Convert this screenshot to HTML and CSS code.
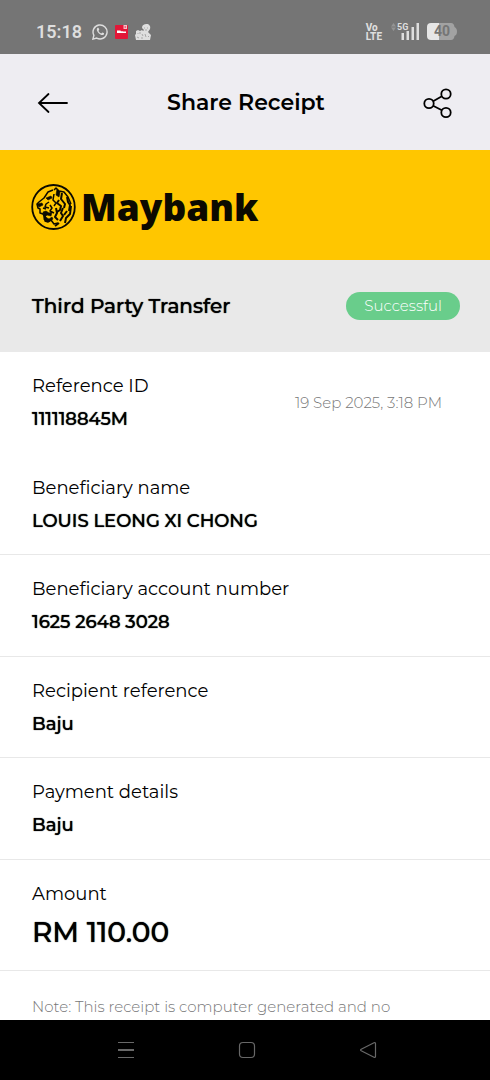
FILE: index.html
```html
<!DOCTYPE html>
<html lang="en">
<head>
<meta charset="utf-8">
<meta name="viewport" content="width=device-width, initial-scale=1">
<title>Share Receipt</title>
<link rel="stylesheet" href="styles.css">
</head>
<body>
<div class="status">
  <span class="time">15:18</span>
  <svg class="status-icon" width="16" height="16" viewBox="0 0 16 16" fill="none" stroke="#dedede" stroke-width="1.4">
    <path d="M.9 15.1l1-3.8a7 7 0 1 1 2.8 2.8z"/>
    <path d="M5.2 4.2c-2 2.200 3.700 8.400 6.400 6.500.6-.5.6-1.300.1-1.600l-1.400-.7-1 1C8 9 7 8 6.500 6.700l.8-1-.6-1.400c-.3-.6-1-.6-1.500-.1z" fill="#dedede" stroke="none"/>
  </svg>
  <svg class="status-icon" width="13" height="14" viewBox="0 0 13 14">
    <rect width="13" height="14" rx="1" fill="#e21738"/>
    <path d="M8.500 0H12v4H8.500z" fill="#f3c3ca"/><path d="M9.500 1.500h1.500v1H9.500z" fill="#e21738"/>
    <path d="M2 5.500h3.500l.5 1 1-.5 1 .5h3v1.500H2z" fill="#fff"/>
  </svg>
  <svg class="status-icon" width="16" height="16" viewBox="0 0 16 16">
    <path d="M7 4C7 1 9 0 11.500 0S16 2 15 5l-2 3 3 3-1 5H1l-1-5 1-1V7l2-1 2 1 2-1 1 1 1-1z" fill="#dedede"/>
    <path d="M9 4h1M12 4h1M10 6h2M3 9v1M5 8v2M2 13l2 1M7 10l1 2M10 10l1 3M13 13l1-1M6 14h2" fill="none" stroke="#a8a8a8"/>
  </svg>
  <span class="volte"><span>Vo</span><span>LTE</span></span>
  <svg class="signal" width="28" height="19" viewBox="0 0 28 19" fill="#dedede">
    <path d="M0 4.500L2.500 1 5 4.500zM0 5.500h5L2.500 9z" fill="#949494"/>
    <text x="6" y="8" class="signal-text">5G</text>
    <path d="M10.500 11H13v7h-2.500zM15.500 9H18v9h-2.500zM20.500 5h2.500v13h-2.500zM25.500 1H28v17h-2.500z"/>
  </svg>
  <svg class="battery" width="30" height="17" viewBox="0 0 30 17">
    <path d="M12 0h12q3 0 3.500 4 2.500 1 2.500 4.500T27.500 13q-.5 4-3.500 4H12z" fill="#a2a2a2"/>
    <path d="M12 0H4Q0 0 0 4v9q0 4 4 4h8z" fill="#e6e6e6"/>
    <text x="7" y="13" class="battery-text">40</text>
  </svg>
</div>
<header class="header">
  <button class="icon-button" aria-label="Back">
    <svg width="32" height="24" viewBox="0 0 32 24" fill="none" stroke="#000" stroke-width="1.800" stroke-linecap="round"><path d="M30 12H2M11.500 3L2 12l9.500 9"/></svg>
  </button>
  <h1 class="page-title">Share Receipt</h1>
  <button class="icon-button" aria-label="Share">
    <svg width="30" height="32" viewBox="0 0 30 32" fill="none" stroke="#000" stroke-width="1.800"><circle cx="6" cy="16.500" r="4.700"/><circle cx="23" cy="7" r="4.700"/><circle cx="23" cy="25.500" r="4.700"/><path d="M10.100 14.200L18.900 9.300M10.100 18.800L18.900 23.200"/></svg>
  </button>
</header>
<main class="receipt">
  <div class="brand">
    <svg class="tiger" width="46" height="48" viewBox="0 0 46 48" fill="none" stroke="#0c0a00" stroke-width="1.500" stroke-linejoin="round">
      <ellipse cx="22.500" cy="24" rx="21.300" ry="22" stroke-width="1.800"/>
      <path d="M23 7l2-2 3 3 5 1 4 5 3 7M22 7l-5 2-4 6-5 4-2 2 1 4 2 1v4l3 1 3 4-1 3 3 1 3-2 3 4 4-1"/>
      <path d="M6 21l5-1 1 2-4 2zM15 15l5-2 1 2-4 2zM26 6l3 3-1 5-3-2zM12 29l3-1 3 2 3-1-1 4-4-1-2 2 4 2 3-2 1 2-4 3-5-2z" fill="#0c0a00" stroke-width=".6"/>
      <path d="M23 11l-1 6 3 3-2 3M18 19l-3 2-1 3 4 1M19 22l2 3-2 3 4 2M12 25l3 1"/>
      <path d="M31 10l-1 6 4 5-1 4M36 14l1 5 2 3-1 6M28 17l-2 3 4 3-1 4-3 2M25 25l1 5-2 4 3 3M32 25l-2 5 2 3-3 5M40 23l-1 8-4 4-1 5M36 28l-3 4M28 40l-4 3" stroke-width="2"/>
    </svg>
    <span class="brand-name">Maybank</span>
  </div>
  <div class="summary">
    <h2 class="summary-title">Third Party Transfer</h2>
    <span class="badge">Successful</span>
  </div>
  <dl class="details">
    <div class="row row-reference">
      <div class="field"><dt>Reference ID</dt><dd>111118845M</dd></div>
      <time class="date" datetime="2025-09-19T15:18">19 Sep 2025, 3:18 PM</time>
    </div>
    <div class="row"><div class="field"><dt>Beneficiary name</dt><dd>LOUIS LEONG XI CHONG</dd></div></div>
    <div class="row"><div class="field"><dt>Beneficiary account number</dt><dd>1625 2648 3028</dd></div></div>
    <div class="row"><div class="field"><dt>Recipient reference</dt><dd>Baju</dd></div></div>
    <div class="row"><div class="field"><dt>Payment details</dt><dd>Baju</dd></div></div>
    <div class="row"><div class="field"><dt>Amount</dt><dd class="amount">RM 110.00</dd></div></div>
  </dl>
  <p class="note">Note: This receipt is computer generated and no</p>
</main>
<nav class="navbar">
  <button class="nav-button" aria-label="Recent apps"><svg width="18" height="18" viewBox="0 0 18 18" fill="none" stroke="#686868"><path d="M1 1.500h16M1 16.500h16"/><path d="M1 9h16" stroke-width="2"/></svg></button>
  <button class="nav-button" aria-label="Home"><svg width="18" height="18" viewBox="0 0 18 18" fill="none" stroke="#686868" stroke-width="1.200"><rect x="1.500" y="1.500" width="15" height="15" rx="3.500"/></svg></button>
  <button class="nav-button" aria-label="Back"><svg width="18" height="18" viewBox="0 0 18 18" fill="none" stroke="#686868" stroke-width="1.200"><path d="M15 1.800L2.200 8.200q-1.200.8 0 1.600L15 16.200q1.500.6 1.500-1V2.800q0-1.600-1.500-1z"/></svg></button>
</nav>
</body>
</html>
```
FILE: styles.css
```css
* { box-sizing: border-box; }

body {
  margin: 0;
  height: 100vh;
  display: flex;
  flex-direction: column;
  background: #fff;
  color: #000;
  font-family: Montserrat, Inter, sans-serif;
}

button {
  display: flex;
  padding: 0;
  border: 0;
  background: none;
}

.status {
  flex: none;
  height: 54px;
  padding: 9px 33px 0 36px;
  display: flex;
  align-items: center;
  background: #757575;
  color: #dedede;
  font-family: Roboto, sans-serif;
}

.time {
  margin-right: 10px;
  font-size: 18px;
  font-weight: 600;
  line-height: 24px;
}

.status-icon { margin-right: 7px; }

.volte {
  margin-left: auto;
  display: flex;
  flex-direction: column;
  font-size: 10px;
  font-weight: 800;
  line-height: 9px;
}

.signal { margin-left: 9px; }

.signal-text {
  font-size: 9px;
  font-weight: 700;
}

.battery { margin-left: 8px; }

.battery-text {
  fill: #757575;
  font-size: 14px;
  font-weight: 700;
}

.header {
  flex: none;
  height: 96px;
  padding: 1px 37px 0;
  display: flex;
  align-items: center;
  justify-content: space-between;
  background: #eeedf2;
}

.page-title {
  margin: 0;
  font-size: 22px;
  font-weight: 600;
  line-height: 32px;
}

.receipt {
  flex: 1;
  min-height: 0;
  overflow: hidden;
}

.brand {
  height: 110px;
  padding: 4px 31px 0;
  display: flex;
  align-items: center;
  gap: 4px;
  background: #ffc600;
  color: #0c0a00;
}

.brand-name {
  font-family: "Open Sans", sans-serif;
  font-size: 37px;
  font-weight: 800;
  line-height: 48px;
}

.summary {
  height: 92px;
  padding: 0 30px 0 32px;
  display: flex;
  align-items: center;
  justify-content: space-between;
  background: #e9e9e9;
}

.summary-title,
dd {
  margin: 0;
  font-weight: 500;
  text-shadow: 0 0 1px #000;
}

.summary-title {
  font-size: 20px;
  line-height: 28px;
}

.badge {
  padding: 0 18px;
  border-radius: 14px;
  background: #69cd8b;
  color: #fff;
  font-size: 15px;
  font-weight: 300;
  line-height: 28px;
}

.details { margin: 0; }

.row {
  padding: 22px 48px 21px 32px;
  display: flex;
  align-items: center;
  justify-content: space-between;
  border-bottom: 1px solid #e8e8e8;
}

.row:nth-child(odd) { padding-bottom: 22px; }

.row-reference { border-bottom-color: transparent; }

.field {
  display: flex;
  flex-direction: column;
  gap: 9px;
}

dt {
  font-size: 18px;
  line-height: 24px;
}

dd {
  font-size: 18px;
  line-height: 24px;
}

.amount {
  font-size: 28px;
  line-height: 34px;
}

.date {
  color: #777;
  font-size: 15px;
  font-weight: 300;
}

.note {
  margin: 24px 32px 0;
  color: #777;
  font-size: 15px;
  font-weight: 300;
  line-height: 24px;
}

.navbar {
  flex: none;
  height: 60px;
  padding: 0 61px 0 65px;
  display: flex;
  align-items: center;
  justify-content: space-around;
  background: #000;
}
```
